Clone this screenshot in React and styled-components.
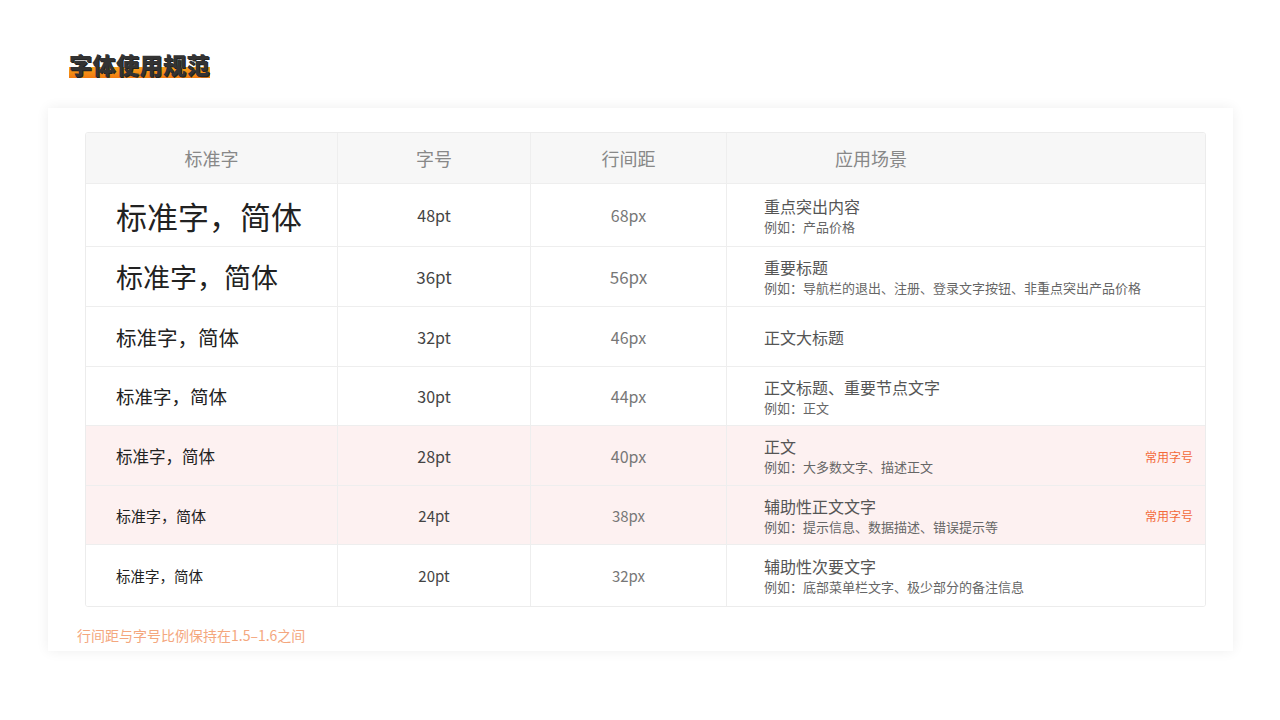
import React from "react";
import styled, { createGlobalStyle } from "styled-components";

const Global = createGlobalStyle`
  body { margin: 0; background: #fff; font-family: "Noto Sans CJK SC", "Noto Sans", sans-serif; }
`;

const Page = styled.div`
  width: 1280px; height: 720px; box-sizing: border-box;
  padding: 50px 47px 0 48px;
`;
const Title = styled.h1`
  margin: 0 0 30px 21px; display: inline-block;
  font-size: 23px; font-weight: 900; color: #333; line-height: 28px; letter-spacing: 0.5px;
  background: linear-gradient(to bottom, transparent 60%, #f7a21b 60%, #f07a10 100%);
  text-shadow: 1px 1px 0 #222;
`;
const Card = styled.div`
  background: #fff; box-shadow: 0 0 12px rgba(0,0,0,0.07);
  padding: 24px 27px 6px 37px;
`;
const Table = styled.div`
  border: 1px solid #ececec; border-radius: 3px; overflow: hidden;
`;
const Row = styled.div`
  display: grid; grid-template-columns: 252px 193px 196px 1fr;
  height: ${p => p.h}px;
  background: ${p => p.head ? "#f7f7f7" : p.hl ? "#fdf1f1" : "#fff"};
  border-top: ${p => p.head ? "none" : "1px solid #eee"};
`;
const Cell = styled.div`
  display: flex; align-items: center; justify-content: ${p => p.left ? "flex-start" : "center"};
  padding-left: ${p => p.pl || 0}px;
  border-right: ${p => p.last ? "none" : "1px solid #eee"};
  font-size: ${p => p.fs || 16}px; color: ${p => p.c || "#555"};
  position: relative;
`;
const Scene = styled.div`
  display: flex; flex-direction: column; gap: 2px; padding-left: 37px; justify-content: center; position: relative;
`;
const Main = styled.div` font-size: 16px; color: #555; line-height: 20px; `;
const Sub = styled.div` font-size: 13px; color: #666; line-height: 17px; `;
const Tag = styled.span`
  position: absolute; right: 12px; top: 50%; transform: translateY(-50%);
  font-size: 12px; color: #f36a3a;
`;
const Note = styled.div` font-size: 14px; color: #f4a77e; margin: 18px 0 0 -36px; line-height: 20px; padding-bottom: 0; `;

const rows = [
  [31, "48pt", "68px", "重点突出内容", "例如：产品价格", 0, 62, 16],
  [27, "36pt", "56px", "重要标题", "例如：导航栏的退出、注册、登录文字按钮、非重点突出产品价格", 0, 59, 17],
  [20.5, "32pt", "46px", "正文大标题", "", 0, 59, 16],
  [18.5, "30pt", "44px", "正文标题、重要节点文字", "例如：正文", 0, 58, 16],
  [16.5, "28pt", "40px", "正文", "例如：大多数文字、描述正文", 1, 59, 16],
  [15, "24pt", "38px", "辅助性正文文字", "例如：提示信息、数据描述、错误提示等", 1, 58, 15],
  [14.5, "20pt", "32px", "辅助性次要文字", "例如：底部菜单栏文字、极少部分的备注信息", 0, 61, 15],
];

export default function App() {
  return (
    <Page>
      <Global />
      <Title>字体使用规范</Title>
      <Card>
        <Table>
          <Row head h={50}>
            <Cell fs={18} c="#888">标准字</Cell>
            <Cell fs={18} c="#888">字号</Cell>
            <Cell fs={18} c="#888">行间距</Cell>
            <Cell fs={18} c="#888" last left pl={108}>应用场景</Cell>
          </Row>
          {rows.map((r, i) => (
            <Row key={i} h={r[6]} hl={r[5]}>
              <Cell left pl={30} fs={r[0]} c="#222">标准字，简体</Cell>
              <Cell fs={r[7]} c="#444">{r[1]}</Cell>
              <Cell fs={r[7]} c="#777">{r[2]}</Cell>
              <Scene>
                <Main>{r[3]}</Main>
                {r[4] && <Sub>{r[4]}</Sub>}
                {r[5] ? <Tag>常用字号</Tag> : null}
              </Scene>
            </Row>
          ))}
        </Table>
        <Note>　　行间距与字号比例保持在1.5–1.6之间</Note>
      </Card>
    </Page>
  );
}
